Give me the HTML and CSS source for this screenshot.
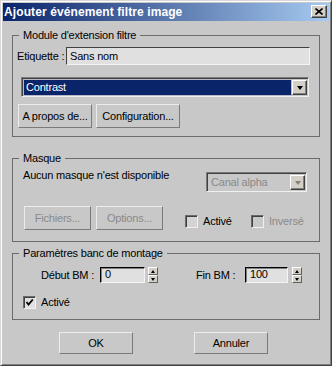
FILE: index.html
```html
<!DOCTYPE html>
<html lang="fr">
<head>
  <meta charset="UTF-8" />
  <title>Ajouter événement filtre image</title>
  <link rel="stylesheet" href="styles.css">
</head>
<body>
  <div class="window">
    <div class="titlebar">
      <span class="title">Ajouter événement filtre image</span>
      <span class="close">
        <svg width="8" height="7" viewBox="0 0 8 7"><path d="M0.5 0.5 L7.5 6.5 M7.5 0.5 L0.5 6.5" stroke="#000" stroke-width="1.6"/></svg>
      </span>
    </div>

    <div class="content">

      <div class="group g-module">
        <div class="legend">Module d'extension filtre</div>
        <div class="row name-row">
          <span class="lbl lbl-name">Etiquette :</span>
          <div class="field field-name">Sans nom</div>
        </div>
        <div class="combo combo-filter">
          <span class="combo-text">Contrast</span>
          <span class="combo-btn"><i class="tri"></i></span>
        </div>
        <div class="row btn-row">
          <button class="btn w-about">A propos de...</button>
          <button class="btn w-config">Configuration...</button>
        </div>
      </div>

      <div class="group g-mask">
        <div class="legend">Masque</div>
        <div class="row mask-row">
          <span class="lbl">Aucun masque n'est disponible</span>
          <div class="combo combo-mask disabled">
            <span class="combo-text">Canal alpha</span>
            <span class="combo-btn"><i class="tri"></i></span>
          </div>
        </div>
        <div class="row mask-btns">
          <button class="btn w-files" disabled>Fichiers...</button>
          <button class="btn w-opts" disabled>Options...</button>
          <label class="chk chk-on"><span class="box"></span>Activé</label>
          <label class="chk chk-inv disabled"><span class="box"></span>Inversé</label>
        </div>
      </div>

      <div class="group g-range">
        <div class="legend">Paramètres banc de montage</div>
        <div class="row range-row">
          <span class="lbl lbl-start">Début BM :</span>
          <div class="field spin-field w-start">0</div>
          <span class="spin">
            <span class="spin-up"><i class="tri up"></i></span>
            <span class="spin-down"><i class="tri"></i></span>
          </span>
          <span class="lbl lbl-end">Fin BM :</span>
          <div class="field spin-field w-end">100</div>
          <span class="spin">
            <span class="spin-up"><i class="tri up"></i></span>
            <span class="spin-down"><i class="tri"></i></span>
          </span>
        </div>
        <div class="row range-chk">
          <label class="chk"><span class="box checked">
            <svg width="9" height="9" viewBox="0 0 9 9"><path d="M1.5 4 L3.5 6.5 L7.8 1.5" fill="none" stroke="#000" stroke-width="1.8"/></svg>
          </span>Activé</label>
        </div>
      </div>

      <div class="row footer">
        <button class="btn w-ok">OK</button>
        <button class="btn w-cancel">Annuler</button>
      </div>

    </div>
  </div>
</body>
</html>
```

FILE: styles.css
```css
:root {
  --bg: #c8c8c8;
  --line: #6c6c6c;
  --light: #ececec;
  --dark: #7a7a7a;
  --field: #e0e0e0;
  --sel: #0a246a;
  --muted: #8a8a8a;
}
* {
  box-sizing: border-box;
}
body {
  margin: 0;
  font-family: "Liberation Sans", Arial, sans-serif;
  font-size: 11px;
  letter-spacing: -0.2px;
  color: #000;
  background: var(--bg);
}
.window {
  width: 332px;
  height: 366px;
  background: var(--bg);
  border: 1px solid;
  border-color: #d8d8d8 #404040 #404040 #d8d8d8;
  box-shadow: inset 1px 1px #fff, inset -1px -1px #808080;
  padding: 2px;
}
.titlebar {
  height: 18px;
  display: flex;
  align-items: flex-start;
  justify-content: space-between;
  padding: 0 2px 0 1px;
  background: linear-gradient(to right, #0a246a, #a6caf0);
}
.title {
  color: #fff;
  font-weight: 700;
  font-size: 12px;
  letter-spacing: 0.1px;
  line-height: 18px;
}
.close {
  margin-top: 2px;
  width: 16px;
  height: 13px;
  background: #d4d0c8;
  border: 1px solid;
  border-color: #fff #404040 #404040 #fff;
  box-shadow: inset -1px -1px #808080;
  display: flex;
  align-items: center;
  justify-content: center;
}
.content {
  padding: 0 9px;
}
.row {
  display: flex;
  align-items: center;
}
.group {
  border: 1px solid var(--line);
  display: flex;
  flex-direction: column;
  align-items: flex-start;
}
.legend {
  margin: -7px 0 0 6px;
  padding: 0 4px;
  line-height: 13px;
  background: var(--bg);
}
.lbl {
  line-height: 13px;
  white-space: nowrap;
}

/* Module d'extension filtre */
.g-module {
  margin-top: 14px;
  padding-bottom: 8px;
}
.name-row {
  margin-top: 5px;
  padding-left: 4px;
}
.lbl-name {
  width: 49px;
}
.field {
  background: var(--field);
  border: 1px solid;
  border-color: #404040 #f4f4f4 #f4f4f4 #404040;
  padding-left: 3px;
  line-height: 14px;
}
.field-name {
  width: 244px;
  height: 18px;
  padding-top: 1px;
}
.combo {
  display: flex;
  height: 20px;
  border: 1px solid;
  border-color: #7a7a7a #f0f0f0 #f0f0f0 #7a7a7a;
  box-shadow: inset 1px 1px #404040;
  padding: 2px 1px 1px 2px;
  background: var(--bg);
}
.combo-filter {
  margin: 12px 0 0 8px;
  width: 288px;
}
.combo-text {
  flex: 1;
  padding-left: 2px;
  line-height: 15px;
  background: var(--sel);
  color: #fff;
  box-shadow: 0 0 0 1px #b8b8c8;
}
.combo-btn {
  width: 15px;
  margin-left: 1px;
  background: #d4d0c8;
  border: 1px solid;
  border-color: #fff #404040 #404040 #fff;
  box-shadow: inset -1px -1px #808080;
  display: flex;
  align-items: center;
  justify-content: center;
}
.tri {
  width: 0;
  height: 0;
  border-left: 3.5px solid transparent;
  border-right: 3.5px solid transparent;
  border-top: 4px solid #000;
}
.tri.up {
  border-top: 0;
  border-bottom: 3px solid #000;
}
.btn-row {
  margin-top: 7px;
  padding-left: 5px;
  gap: 4px;
}
.btn {
  font: inherit;
  letter-spacing: inherit;
  color: #000;
  background: var(--bg);
  border: 1px solid;
  border-color: var(--light) var(--dark) var(--dark) var(--light);
  border-radius: 0;
  padding: 0;
  height: 24px;
  text-align: center;
}
.btn:disabled {
  color: var(--muted);
}
.w-about { width: 74px; }
.w-config { width: 84px; }

/* Masque */
.g-mask {
  margin-top: 21px;
  padding-bottom: 11px;
  align-items: stretch;
}
.g-mask .legend {
  align-self: flex-start;
}
.mask-row {
  margin-top: 4px;
  padding: 0 12px 0 10px;
  align-items: flex-start;
  justify-content: space-between;
}
.combo-mask {
  margin-top: 3px;
  width: 101px;
}
.disabled .combo-text {
  background: var(--bg);
  color: var(--muted);
  box-shadow: none;
}
.disabled .tri {
  border-top-color: #808080;
}
.mask-btns {
  margin-top: 14px;
  padding-left: 11px;
  align-items: flex-end;
}
.w-files { width: 67px; }
.w-opts { width: 67px; margin-left: 5px; }
.chk {
  display: flex;
  align-items: center;
  gap: 5px;
  line-height: 13px;
}
.mask-btns .chk {
  margin-bottom: 2px;
}
.chk-on {
  margin-left: 22px;
  width: 66px;
}
.chk.disabled {
  color: var(--muted);
}
.box {
  width: 13px;
  height: 13px;
  border: 1px solid;
  border-color: #6a6a6a #f0f0f0 #f0f0f0 #6a6a6a;
  box-shadow: inset 1px 1px #404040;
  background: #d4d4d4;
  display: flex;
  align-items: center;
  justify-content: center;
}
.chk.disabled .box {
  background: var(--bg);
}
.box.checked {
  background: var(--field);
}

/* Paramètres banc de montage */
.g-range {
  margin-top: 11px;
  padding-bottom: 10px;
}
.range-row {
  margin-top: 7px;
  padding-left: 28px;
  height: 16px;
  align-items: stretch;
}
.range-row .lbl {
  display: flex;
  align-items: center;
  padding-top: 1px;
}
.lbl-start { width: 59px; }
.lbl-end { width: 49px; margin-left: 38px; }
.spin-field {
  height: 16px;
  line-height: 13px;
  border-color: #000 #f4f4f4 #f4f4f4 #000;
  box-shadow: inset 1px 1px #808080;
  padding-left: 4px;
}
.w-start { width: 45px; }
.w-end { width: 43px; }
.spin {
  width: 10px;
  margin-left: 3px;
  display: flex;
  flex-direction: column;
}
.w-end + .spin {
  margin-left: 4px;
}
.spin-up, .spin-down {
  flex: 1;
  background: #d4d0c8;
  border: 1px solid;
  border-color: #fff #606060 #606060 #fff;
  display: flex;
  align-items: center;
  justify-content: center;
}
.spin .tri {
  border-left-width: 2.5px;
  border-right-width: 2.5px;
  border-top-width: 3px;
}
.spin .tri.up {
  border-top-width: 0;
  border-bottom-width: 3px;
}
.range-chk {
  margin-top: 13px;
  padding-left: 10px;
}

/* Boutons du bas */
.footer {
  margin-top: 12px;
  padding-left: 47px;
  gap: 61px;
}
.footer .btn {
  height: 22px;
}
.w-ok, .w-cancel { width: 74px; }
```
